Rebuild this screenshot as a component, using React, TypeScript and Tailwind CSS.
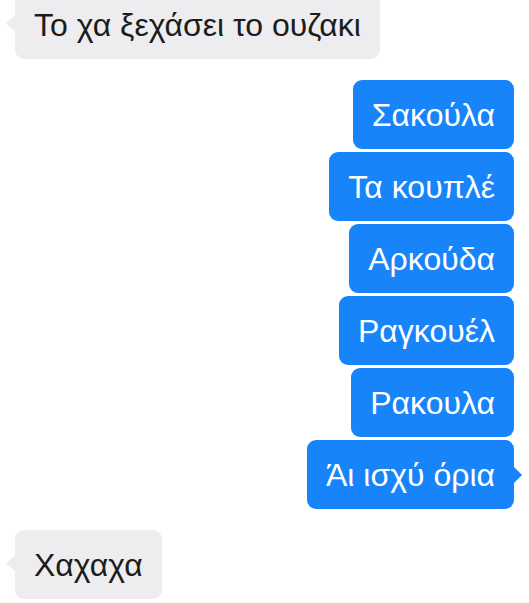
import React from "react";

type Msg = { text: string; mine: boolean; tail?: boolean };

const messages: Msg[][] = [
  [{ text: "Το χα ξεχάσει το ουζακι", mine: false, tail: true }],
  [
    { text: "Σακούλα", mine: true },
    { text: "Τα κουπλέ", mine: true },
    { text: "Αρκούδα", mine: true },
    { text: "Ραγκουέλ", mine: true },
    { text: "Ρακουλα", mine: true },
    { text: "Άι ισχύ όρια", mine: true, tail: true },
  ],
  [{ text: "Χαχαχα", mine: false, tail: true }],
];

function Bubble({ text, mine, tail }: Msg) {
  return (
    <div
      className={`relative flex h-[69px] items-center rounded-[9px] px-[19px] text-[32px] leading-none ${
        mine ? "self-end bg-[#1784fa] text-white" : "self-start bg-[#edecee] text-[#1c1c1c]"
      }`}
    >
      {tail && mine && (
        <span className="absolute right-[-8px] top-1/2 h-0 w-0 -translate-y-1/2 border-y-[9px] border-l-[9px] border-y-transparent border-l-[#1784fa]" />
      )}
      {tail && !mine && (
        <span className="absolute left-[-9px] top-1/2 h-0 w-0 -translate-y-[60%] border-y-[9px] border-r-[10px] border-y-transparent border-r-[#edecee]" />
      )}
      {text}
    </div>
  );
}

export default function App() {
  return (
    <div
      className="flex h-[603px] w-[529px] flex-col gap-[21px] overflow-hidden bg-white pl-[15px] pr-[15px]"
      style={{ fontFamily: '"Liberation Sans", Arial, sans-serif' }}
    >
      {messages.map((group, i) => (
        <div key={i} className={`flex flex-col gap-[3px] ${i === 0 ? "mt-[-10px]" : ""}`}>
          {group.map((m) => (
            <Bubble key={m.text} {...m} />
          ))}
        </div>
      ))}
    </div>
  );
}
